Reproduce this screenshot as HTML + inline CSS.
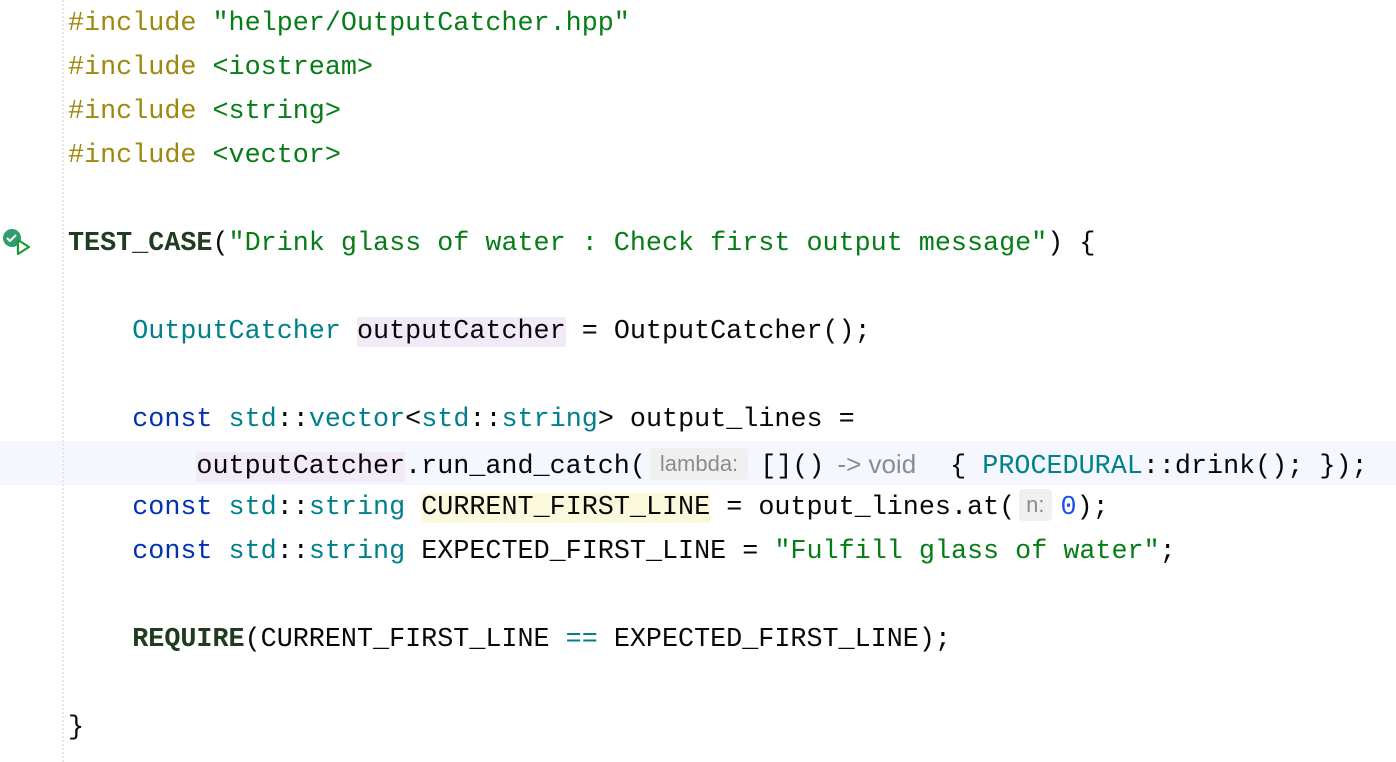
<!DOCTYPE html>
<html><head><meta charset="utf-8"><style>
body{margin:0;width:1396px;height:762px;background:#fff;overflow:hidden;position:relative}
.g{position:absolute;left:62px;top:0;height:762px;border-left:2px dotted #e4e6ea}
.cur{position:absolute;left:0;top:441px;width:1396px;height:44px;background:#f4f7fd}
.l{position:absolute;left:68px;height:44px;line-height:44px;font-family:"Liberation Mono",monospace;font-size:26.75px;color:#080808;white-space:pre}
.pp{color:#9e880d}.s{color:#067d17}.k{color:#0033b3}.t{color:#00808a}.m{color:#1f3b20;font-weight:bold}.n{color:#1750eb}
.h{display:inline-block;font-family:"Liberation Sans",sans-serif;font-size:22px;color:#8c8c8c;background:#f0f0f0;border-radius:4px;line-height:32px;vertical-align:2px;padding:0 10px;margin:0 12px 0 4px}
.h2{padding:0 7px;margin:0 9px 0 4px}
.hs{font-family:"Liberation Sans",sans-serif;font-size:26px;color:#8c8c8c;margin-left:13px;margin-right:34px}
.pv{background:#f3eaf8}.yv{background:#fbf9dc}
</style></head><body>
<div class="cur"></div>
<div class="g"></div>
<svg style="position:absolute;left:2px;top:228px" width="30" height="30" viewBox="0 0 30 30"><circle cx="10" cy="10" r="9" fill="#2f9e6e"/><path d="M5 10l3 3 6-6" stroke="#fff" stroke-width="2" fill="none"/><path d="M16 12v14l11-7z" fill="#fff" stroke="#1c9a3a" stroke-width="2.2" stroke-linejoin="round"/></svg>
<div class="l" style="top:2px"><span class="pp">#include</span> <span class="s">"helper/OutputCatcher.hpp"</span></div>
<div class="l" style="top:46px"><span class="pp">#include</span> <span class="s">&lt;iostream&gt;</span></div>
<div class="l" style="top:90px"><span class="pp">#include</span> <span class="s">&lt;string&gt;</span></div>
<div class="l" style="top:134px"><span class="pp">#include</span> <span class="s">&lt;vector&gt;</span></div>
<div class="l" style="top:222px"><span class="m">TEST_CASE</span>(<span class="s">"Drink glass of water : Check first output message"</span>) {</div>
<div class="l" style="top:310px">    <span class="t">OutputCatcher</span> <span class="pv">outputCatcher</span> = OutputCatcher();</div>
<div class="l" style="top:398px">    <span class="k">const</span> <span class="t">std</span>::<span class="t">vector</span>&lt;<span class="t">std</span>::<span class="t">string</span>&gt; output_lines =</div>
<div class="l" style="top:442px">        <span class="pv">outputCatcher</span>.run_and_catch(<span class="h">lambda:</span>[]()<span class="hs">-&gt; void</span>{ <span class="t">PROCEDURAL</span>::drink(); });</div>
<div class="l" style="top:486px">    <span class="k">const</span> <span class="t">std</span>::<span class="t">string</span> <span class="yv">CURRENT_FIRST_LINE</span> = output_lines.at(<span class="h h2">n:</span><span class="n">0</span>);</div>
<div class="l" style="top:530px">    <span class="k">const</span> <span class="t">std</span>::<span class="t">string</span> EXPECTED_FIRST_LINE = <span class="s">"Fulfill glass of water"</span>;</div>
<div class="l" style="top:618px">    <span class="m">REQUIRE</span>(CURRENT_FIRST_LINE <span class="t">==</span> EXPECTED_FIRST_LINE);</div>
<div class="l" style="top:706px">}</div>
</body></html>
